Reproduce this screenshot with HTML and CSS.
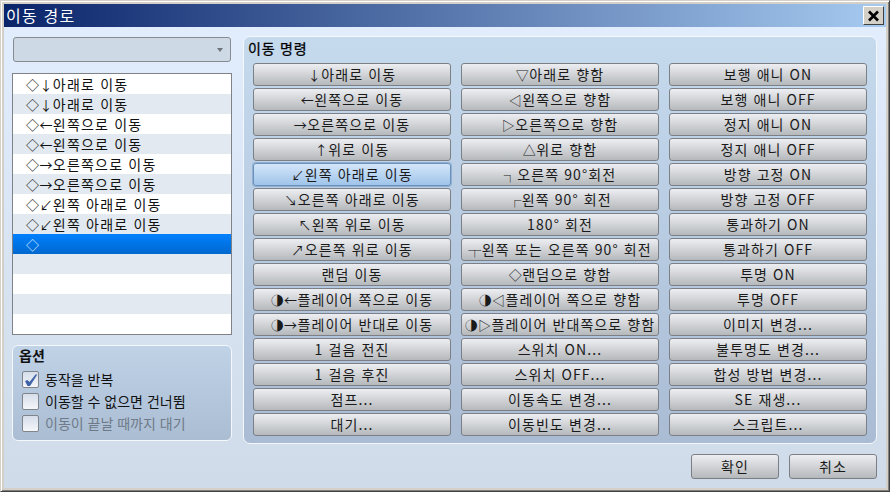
FILE: index.html
```html
<!DOCTYPE html>
<html lang="ko">
<head>
<meta charset="utf-8">
<title>이동 경로</title>
<link rel="stylesheet" href="styles.css">
</head>
<body>
<div class="window">
  <header class="titlebar">
    <span class="title">이동 경로</span>
    <span class="close"><svg width="13" height="12" viewBox="0 0 13 12"><path d="M2 1.5 L11 10.5 M11 1.5 L2 10.5" stroke="#000" stroke-width="2.6" fill="none"/></svg></span>
  </header>
  <div class="content">
    <div class="main">
      <div class="left">
        <div class="combo"><span class="combo-arrow"></span></div>
        <ul class="list">
          <li><i>◇↓</i>아래로 이동</li>
          <li><i>◇↓</i>아래로 이동</li>
          <li><i>◇←</i>왼쪽으로 이동</li>
          <li><i>◇←</i>왼쪽으로 이동</li>
          <li><i>◇→</i>오른쪽으로 이동</li>
          <li><i>◇→</i>오른쪽으로 이동</li>
          <li><i>◇↙</i>왼쪽 아래로 이동</li>
          <li><i>◇↙</i>왼쪽 아래로 이동</li>
          <li class="selected"><i>◇</i></li>
          <li></li>
          <li></li>
          <li></li>
          <li></li>
        </ul>
        <section class="options">
          <h2 class="options-title">옵션</h2>
          <label class="check"><span class="box"><svg width="15" height="15" viewBox="0 0 15 15"><path d="M2 9 L4.5 8 L6.5 10 L13 2 L14 3 L7 14 L4.5 14 Z" fill="#3f62a8"/></svg></span>동작을 반복</label>
          <label class="check"><span class="box"></span>이동할 수 없으면 건너뜀</label>
          <label class="check disabled"><span class="box"></span>이동이 끝날 때까지 대기</label>
        </section>
      </div>
      <section class="panel">
        <h2 class="panel-title">이동 명령</h2>
        <div class="grid">
          <button class="btn"><i>↓</i>아래로 이동</button>
          <button class="btn"><i>▽</i>아래로 향함</button>
          <button class="btn">보행 애니 ON</button>
          <button class="btn"><i>←</i>왼쪽으로 이동</button>
          <button class="btn"><i>◁</i>왼쪽으로 향함</button>
          <button class="btn">보행 애니 OFF</button>
          <button class="btn"><i>→</i>오른쪽으로 이동</button>
          <button class="btn"><i>▷</i>오른쪽으로 향함</button>
          <button class="btn">정지 애니 ON</button>
          <button class="btn"><i>↑</i>위로 이동</button>
          <button class="btn"><i>△</i>위로 향함</button>
          <button class="btn">정지 애니 OFF</button>
          <button class="btn focus"><i>↙</i>왼쪽 아래로 이동</button>
          <button class="btn"><i>┐</i>오른쪽 90°회전</button>
          <button class="btn">방향 고정 ON</button>
          <button class="btn"><i>↘</i>오른쪽 아래로 이동</button>
          <button class="btn"><i>┌</i>왼쪽 90° 회전</button>
          <button class="btn">방향 고정 OFF</button>
          <button class="btn"><i>↖</i>왼쪽 위로 이동</button>
          <button class="btn">180° 회전</button>
          <button class="btn">통과하기 ON</button>
          <button class="btn"><i>↗</i>오른쪽 위로 이동</button>
          <button class="btn"><i>┬</i>왼쪽 또는 오른쪽 90° 회전</button>
          <button class="btn">통과하기 OFF</button>
          <button class="btn">랜덤 이동</button>
          <button class="btn"><i>◇</i>랜덤으로 향함</button>
          <button class="btn">투명 ON</button>
          <button class="btn"><i>◑←</i>플레이어 쪽으로 이동</button>
          <button class="btn"><i>◑◁</i>플레이어 쪽으로 향함</button>
          <button class="btn">투명 OFF</button>
          <button class="btn"><i>◑→</i>플레이어 반대로 이동</button>
          <button class="btn"><i>◑▷</i>플레이어 반대쪽으로 향함</button>
          <button class="btn">이미지 변경...</button>
          <button class="btn">1 걸음 전진</button>
          <button class="btn">스위치 ON...</button>
          <button class="btn">불투명도 변경...</button>
          <button class="btn">1 걸음 후진</button>
          <button class="btn">스위치 OFF...</button>
          <button class="btn">합성 방법 변경...</button>
          <button class="btn">점프...</button>
          <button class="btn">이동속도 변경...</button>
          <button class="btn">SE 재생...</button>
          <button class="btn">대기...</button>
          <button class="btn">이동빈도 변경...</button>
          <button class="btn">스크립트...</button>
        </div>
      </section>
    </div>
    <footer class="footer">
      <button class="btn action">확인</button>
      <button class="btn action">취소</button>
    </footer>
  </div>
</div>
</body>
</html>
```
FILE: styles.css
```css
* { box-sizing: border-box; }
html, body { margin: 0; padding: 0; }
body {
  width: 890px;
  height: 492px;
  overflow: hidden;
  background: #d4d0c8;
  font-family: "Noto Sans CJK KR", "Noto Sans", sans-serif;
  font-size: 14px;
  letter-spacing: 1.2px;
  color: #111;
}
i {
  font-style: normal;
  font-size: 13px;
  letter-spacing: 0.4px;
}
.window {
  width: 890px;
  height: 492px;
  display: flex;
  flex-direction: column;
  border-style: solid;
  border-width: 1px;
  border-color: #d4d0c8 #404040 #404040 #d4d0c8;
  padding: 3px;
  box-shadow: inset 1px 1px 0 #fff, inset -1px -1px 0 #808080;
}
.titlebar {
  height: 23px;
  flex: none;
  display: flex;
  align-items: center;
  justify-content: space-between;
  padding: 0 2px;
  background: linear-gradient(to right, #0a246a, #a6caf0);
}
.title {
  color: #fff;
  font-size: 16px;
  line-height: 23px;
  letter-spacing: 1.2px;
}
.close {
  width: 21px;
  height: 19px;
  display: flex;
  align-items: center;
  justify-content: center;
  background: #d4d0c8;
  border: 1px solid;
  border-color: #fff #404040 #404040 #fff;
}
.content {
  flex: 1;
  display: flex;
  flex-direction: column;
  background: linear-gradient(to bottom, #e1edfd, #cfdbe8);
  padding: 9px 9px 9px 8px;
}
.main {
  display: flex;
  gap: 11px;
}
.left {
  width: 220px;
  flex: none;
  display: flex;
  flex-direction: column;
}
.combo {
  height: 25px;
  margin: 1px 1px 0;
  background: #cdd9e5;
  border: 1px solid #868b92;
  border-radius: 3px;
  display: flex;
  align-items: center;
  justify-content: flex-end;
  padding-right: 7px;
}
.combo-arrow {
  width: 0;
  height: 0;
  border-left: 3.5px solid transparent;
  border-right: 3.5px solid transparent;
  border-top: 4px solid #6e747c;
}
.list {
  list-style: none;
  margin: 11px 0 0;
  padding: 0;
  height: 262px;
  border: 1px solid #7f8388;
  background: #fff;
  white-space: nowrap;
}
.list li {
  height: 20px;
  line-height: 20px;
  padding-left: 13px;
  background: #fff;
}
.list li:nth-child(even) { background: #e2e9f0; }
.list li.selected {
  background: linear-gradient(to bottom, #0080ff, #0068cf);
  color: #d8e8ff;
}
.options {
  margin-top: 10px;
  height: 96px;
  border: 1px solid #f4f8fc;
  border-radius: 6px;
  background: linear-gradient(to bottom, #bfd2e6, #aabdd3);
  padding: 0 0 0 9px;
}
.options-title {
  margin: 0 0 0 -3px;
  font-size: 14px;
  font-weight: 700;
  line-height: 19px;
  letter-spacing: 0;
  height: 25px;
}
.check {
  display: flex;
  align-items: center;
  gap: 6px;
  height: 17px;
  margin-bottom: 5px;
  line-height: 17px;
  letter-spacing: 0;
}
.check.disabled { color: #6f7a88; }
.box {
  width: 17px;
  height: 17px;
  flex: none;
  border: 1px solid #80858c;
  border-radius: 2px;
  background: linear-gradient(to bottom, #d6deea, #f4f6f9);
  display: flex;
}
.panel {
  flex: 1;
  height: 408px;
  border: 1px solid #f4f8fc;
  border-radius: 7px;
  background: linear-gradient(to bottom, #c6daee, #a9bcd4);
  padding: 0 9px;
}
.panel-title {
  margin: 0 0 0 -5px;
  height: 26px;
  font-size: 14px;
  font-weight: 400;
  line-height: 23px;
  letter-spacing: 0.8px;
  color: #000;
  -webkit-text-stroke: 0.3px #000;
}
.grid {
  display: grid;
  grid-template-columns: repeat(3, 198px);
  grid-auto-rows: 23px;
  column-gap: 10px;
  row-gap: 2px;
}
.btn {
  font: inherit;
  letter-spacing: 1.1px;
  color: #1a1a1a;
  padding: 0;
  margin: 0;
  line-height: 21px;
  white-space: nowrap;
  overflow: hidden;
  border: 1px solid #7c8086;
  border-radius: 3px;
  background: linear-gradient(to bottom, #eceef1, #dcdee2 30%, #b6b9bc);
}
.btn.focus {
  background: linear-gradient(to bottom, #d4e6f9, #9fc4ea);
  border-color: #6b90ba;
  box-shadow: 0 0 0 1px #8fb0d4;
}
.footer {
  margin-top: 10px;
  display: flex;
  justify-content: flex-end;
  gap: 10px;
}
.action {
  width: 88px;
  height: 25px;
}
```
